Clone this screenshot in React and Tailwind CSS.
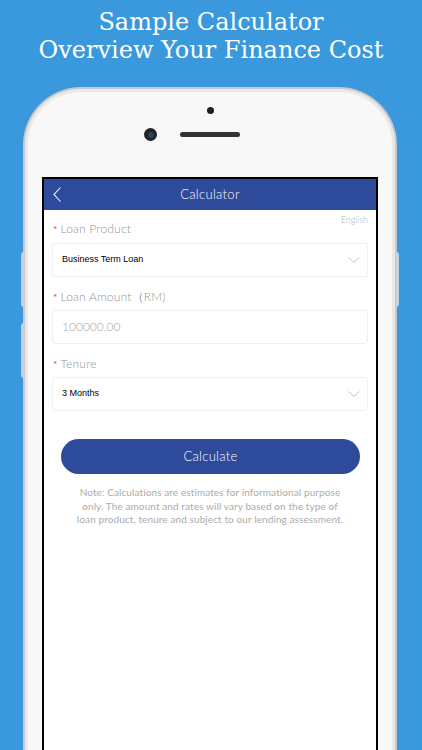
import React from 'react';

const SANS = { fontFamily: 'Lato, "Open Sans", sans-serif' };

function Chevron() {
  return (
    <svg width="12" height="6" viewBox="0 0 12 6" fill="none">
      <polyline points="0.5,0.5 6,5.3 11.5,0.5" stroke="#bcbcbc" strokeWidth="0.9" />
    </svg>
  );
}

function Label({ children }) {
  return (
    <div className="flex h-4 items-center pl-[9px] text-[12px] font-light leading-4 tracking-[0.2px] text-[#949494]">
      <span className="mr-[3px] text-[10px] font-normal text-[#e0365c]">*</span>
      {children}
    </div>
  );
}

function SelectBox({ value }) {
  return (
    <div className="mx-2 flex h-[34px] items-center justify-between rounded-[3px] border border-[#efefef] pl-[9px] pr-[7px]">
      <span className="text-[9px] text-black" style={{ fontFamily: '"Liberation Sans", Arial, sans-serif' }}>
        {value}
      </span>
      <Chevron />
    </div>
  );
}

export default function App() {
  return (
    <div className="flex h-[750px] w-[422px] flex-col overflow-hidden bg-[#3a98dc]" style={SANS}>
      <div
        className="pt-[8px] text-center text-[24px] leading-[28px] text-white"
        style={{ fontFamily: '"DejaVu Serif", serif' }}
      >
        <div>Sample Calculator</div>
        <div>Overview Your Finance Cost</div>
      </div>

      <div className="relative ml-[23px] mt-[23px] flex h-[720px] w-[374px] shrink-0 flex-col">
        <div className="absolute left-[-2px] top-[165px] h-[55px] w-[3px] rounded-l bg-[#c5d3df]" />
        <div className="absolute left-[-2px] top-[236px] h-[55px] w-[3px] rounded-l bg-[#c5d3df]" />
        <div className="absolute right-[-2px] top-[165px] h-[55px] w-[3px] rounded-r bg-[#c5d3df]" />

        <div className="flex flex-1 flex-col rounded-t-[58px] border-[2px] border-b-0 border-[#c8c8c8] bg-[#f8f8f8] shadow-[inset_0_0_0_3px_#e9e9e9]">
          <div className="flex h-[88px] flex-col items-center">
            <div className="mt-[18px] h-[7px] w-[7px] rounded-full bg-[#1e1e1e]" />
            <div className="relative mt-[18px] h-[5px] w-[60px] rounded-full bg-[#333]">
              <div className="absolute left-[-36px] top-[-4px] flex h-[13px] w-[13px] items-center justify-center rounded-full bg-[#222]">
                <div className="h-[6px] w-[6px] rounded-full bg-[#2c3f66]" />
              </div>
            </div>
          </div>

          <div className="mx-[17px] flex flex-1 flex-col border-x-[2px] border-t-[2px] border-black bg-white">
            <div className="relative flex h-[31px] items-center justify-center bg-[#2e4a9b]">
              <svg className="absolute left-[9px] top-[8px]" width="9" height="15" viewBox="0 0 9 15" fill="none">
                <polyline points="7.5,0.5 1,7.5 7.5,14.5" stroke="#ffffff" strokeWidth="1.1" />
              </svg>
              <span className="text-[13px] font-light tracking-[0.3px] text-white">Calculator</span>
            </div>

            <div className="relative flex flex-col">
              <div className="absolute right-[8px] top-[3px] text-[9px] font-light leading-[14px] text-[#b3b3b3]">English</div>

              <div className="mt-[11px]">
                <Label>Loan Product</Label>
              </div>
              <div className="mt-[6px]">
                <SelectBox value="Business Term Loan" />
              </div>

              <div className="mt-[12px]">
                <Label>Loan Amount（RM)</Label>
              </div>
              <div className="mx-2 mt-[5px] flex h-[34px] items-center rounded-[3px] border border-[#efefef] pl-[9px]">
                <span className="text-[12px] font-light text-[#a3a3a3]">100000.00</span>
              </div>

              <div className="mt-[12px]">
                <Label>Tenure</Label>
              </div>
              <div className="mt-[5px]">
                <SelectBox value="3 Months" />
              </div>

              <button className="ml-[17px] mr-[16px] mt-[28px] flex h-[35px] items-center justify-center rounded-full bg-[#2e4a9b] text-[13px] font-light tracking-[0.3px] text-white">
                Calculate
              </button>

              <p className="mt-[12px] whitespace-nowrap text-center text-[10px] leading-[13.5px] tracking-[0.1px] text-[#ababab]">
                Note: Calculations are estimates for informational purpose
                <br />
                only. The amount and rates will vary based on the type of
                <br />
                loan product, tenure and subject to our lending assessment.
              </p>
            </div>
          </div>
        </div>
      </div>
    </div>
  );
}
